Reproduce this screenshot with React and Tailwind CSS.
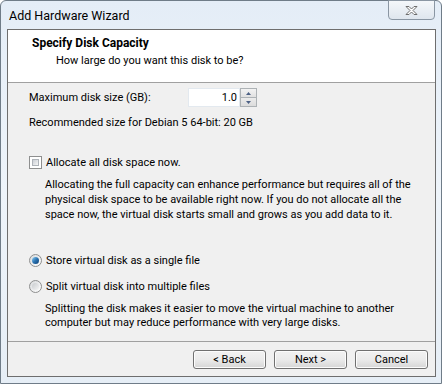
import React from 'react';

const font = { fontFamily: 'Roboto, "Noto Sans", sans-serif' };

// Win7 style push button
const Button = ({ children }) => (
  <button className="w-[73px] h-[19px] rounded-[3px] border border-[#707070] bg-gradient-to-b from-[#f2f2f2] via-[#ebebeb] to-[#d6d6d6] text-[11px] text-black leading-none shadow-[inset_0_0_0_1px_#fcfcfc]">
    {children}
  </button>
);

const Checkbox = () => (
  <span className="w-[13px] h-[13px] border border-[#8e8f8f] bg-white p-[2px] flex">
    <span className="flex-1 bg-gradient-to-br from-[#cbcfd5] to-[#f6f6f6] border border-[#aeb3b9]" />
  </span>
);

const Radio = ({ checked }) => (
  <span className="w-[13px] h-[13px] rounded-full border border-[#8e8f8f] bg-gradient-to-br from-[#d8dadc] to-[#ffffff] flex items-center justify-center">
    {checked ? (
      <span className="w-[7px] h-[7px] rounded-full bg-gradient-to-br from-[#8ad3fb] via-[#2c73b0] to-[#0d3f75]" />
    ) : (
      <span className="w-[7px] h-[7px] rounded-full bg-gradient-to-br from-[#c9cccf] to-[#f4f4f4]" />
    )}
  </span>
);

export default function App() {
  return (
    <div className="w-[442px] h-[385px] bg-white" style={font}>
      <div className="relative w-[442px] h-[384px] rounded-t-[6px] border border-[#6f7c88] bg-gradient-to-b from-[#e4edf7] via-[#eef4fa] to-[#e6eef6] pl-[6px] pr-[5px] pt-[28px] pb-[6px] flex flex-col">
        {/* title */}
        <div className="absolute left-[8px] top-[6px] text-[12.5px] text-black leading-[17px]">
          Add Hardware Wizard
        </div>
        {/* close button */}
        <div className="absolute right-[6px] top-[-1px] w-[47px] h-[20px] rounded-b-[4px] border border-[#8a96a3] bg-gradient-to-b from-[#f4f7fa] to-[#dfe6ee] flex items-center justify-center">
          <svg width="13" height="11" viewBox="0 0 13 11">
            <path
              d="M1 1.5 L4 1.5 L6.5 4 L9 1.5 L12 1.5 L8 5.5 L12 9.5 L9 9.5 L6.5 7 L4 9.5 L1 9.5 L5 5.5 Z"
              fill="#ffffff"
              stroke="#6e6e6e"
              strokeWidth="1"
              strokeLinejoin="round"
            />
          </svg>
        </div>

        {/* client area */}
        <div className="flex-1 border border-[#6e6e6e] bg-[#f0f0f0] flex flex-col">
          {/* header */}
          <div className="h-[53px] bg-white border-b border-[#a0a0a0] pl-[24px] pt-[5px]">
            <div className="text-[12px] font-bold leading-[17px] text-black">Specify Disk Capacity</div>
            <div className="text-[11px] leading-[17px] text-black pl-[24px]">How large do you want this disk to be?</div>
          </div>

          {/* body */}
          <div className="flex-1 pl-[21px] pr-[12px] text-[11px] text-black leading-[15px]">
            <div className="mt-[5px] flex items-center h-[19px]">
              <span className="w-[159px]">Maximum disk size (GB):</span>
              <div className="flex h-[19px]">
                <div className="w-[52px] bg-white border border-[#e3e9ef] flex items-center justify-end pr-[2px]">1.0</div>
                <div className="w-[17px] flex flex-col border border-[#adb2b5]">
                  <div className="flex-1 bg-gradient-to-b from-[#f3f3f3] to-[#e1e1e1] border-b border-[#adb2b5] flex items-center justify-center">
                    <svg width="5" height="3" viewBox="0 0 5 3"><path d="M2.5 0 L5 3 L0 3 Z" fill="#4d6185" /></svg>
                  </div>
                  <div className="flex-1 bg-gradient-to-b from-[#ececec] to-[#dcdcdc] flex items-center justify-center">
                    <svg width="5" height="3" viewBox="0 0 5 3"><path d="M0 0 L5 0 L2.5 3 Z" fill="#4d6185" /></svg>
                  </div>
                </div>
              </div>
            </div>
            <div className="mt-[8px]">Recommended size for Debian 5 64-bit: 20 GB</div>

            <div className="mt-[25px] flex items-center gap-[4px]">
              <Checkbox />
              <span>Allocate all disk space now.</span>
            </div>
            <p className="mt-[7px] pl-[16px] leading-[15px]">
              Allocating the full capacity can enhance performance but requires all of the physical disk space to be available right now. If you do not allocate all the space now, the virtual disk starts small and grows as you add data to it.
            </p>

            <div className="mt-[31px] flex items-center gap-[4px]">
              <Radio checked />
              <span>Store virtual disk as a single file</span>
            </div>
            <div className="mt-[11px] flex items-center gap-[4px]">
              <Radio />
              <span>Split virtual disk into multiple files</span>
            </div>
            <p className="mt-[8px] pl-[16px] leading-[14px]">
              Splitting the disk makes it easier to move the virtual machine to another computer but may reduce performance with very large disks.
            </p>
          </div>

          {/* footer */}
          <div className="h-[35px] border-t border-[#a0a0a0] flex items-start justify-end gap-[8px] pt-[8px] pr-[7px]">
            <Button>&lt; Back</Button>
            <Button>Next &gt;</Button>
            <Button>Cancel</Button>
          </div>
        </div>
      </div>
    </div>
  );
}
